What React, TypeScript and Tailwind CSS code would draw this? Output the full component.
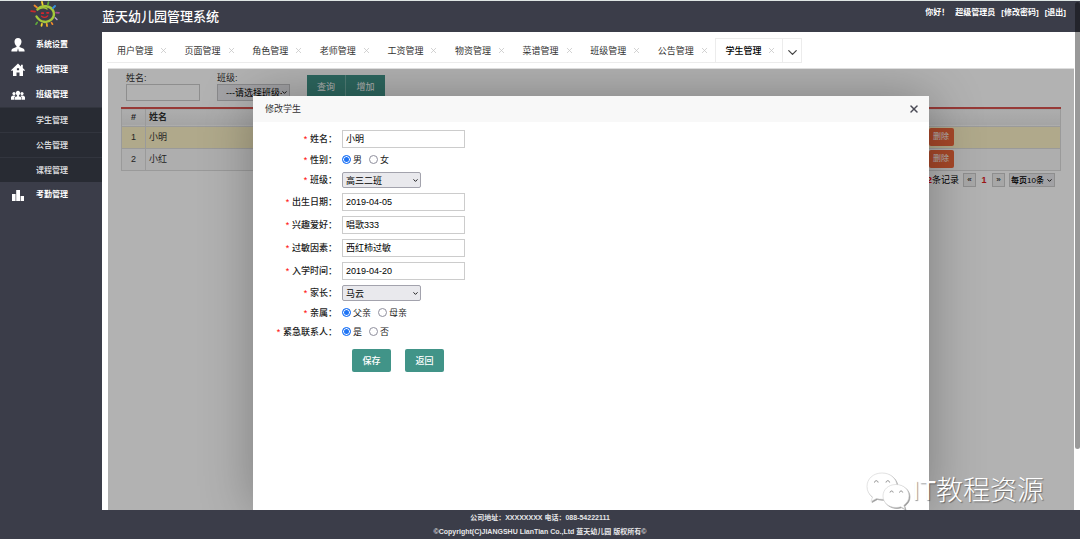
import React from 'react';
import { ChevronDown, X } from 'lucide-react';

const tabs = [
  '用户管理',
  '页面管理',
  '角色管理',
  '老师管理',
  '工资管理',
  '物资管理',
  '菜谱管理',
  '班级管理',
  '公告管理',
  '学生管理'
];

const students = ['小明', '小红'];

type Field = {
  id: string;
  label: string;
  type: 'text' | 'select' | 'radio';
  value: string;
  options?: string[];
};

const fields: Field[] = [
  { id: 'name', label: '姓名', type: 'text', value: '小明' },
  { id: 'sex', label: '性别', type: 'radio', value: '男', options: ['男', '女'] },
  { id: 'clazz', label: '班级', type: 'select', value: '高三二班' },
  { id: 'birthday', label: '出生日期', type: 'text', value: '2019-04-05' },
  { id: 'hobby', label: '兴趣爱好', type: 'text', value: '唱歌333' },
  { id: 'allergy', label: '过敏因素', type: 'text', value: '西红柿过敏' },
  { id: 'entrance', label: '入学时间', type: 'text', value: '2019-04-20' },
  { id: 'parent', label: '家长', type: 'select', value: '马云' },
  { id: 'relation', label: '亲属', type: 'radio', value: '父亲', options: ['父亲', '母亲'] },
  { id: 'urgent', label: '紧急联系人', type: 'radio', value: '是', options: ['是', '否'] }
];

const SunLogo: React.FC = () => (
  <svg viewBox="0 0 30 26" className="w-[30px] h-[26px]" fill="none" strokeLinecap="round">
    <path d="M7.500 8.500C11 3.500 21 4 23.500 10.500C25.500 17 19.500 21.800 14 20.800C10.500 20.300 8 18 6.500 15.500" stroke="#a5c83a" strokeWidth="2.400" />
    <path d="M7.500 8.500C11 6.500 15 6.500 17 8" stroke="#a5c83a" strokeWidth="1.500" />
    <path d="M11.800 12.200h1.400M17 11.800h1.400" stroke="#d9252b" strokeWidth="1.800" />
    <path d="M11.500 15.200c2 1.600 4.600 1.400 6.200-.4" stroke="#d9252b" strokeWidth="1.200" />
    <path d="M12 1l.6 2.600" stroke="#f3d22f" strokeWidth="1.800" />
    <path d="M18.500 1.200l-.6 2.200" stroke="#5fa83a" strokeWidth="1.800" />
    <path d="M4.500 4.500l2.500 2" stroke="#ee8a2c" strokeWidth="1.800" />
    <path d="M1.200 10.200l3.800.5" stroke="#c62a2d" strokeWidth="1.800" />
    <path d="M25 5l-2 2" stroke="#3b8fd6" strokeWidth="2" />
    <path d="M29 11.800l-3-.2" stroke="#a04b8f" strokeWidth="1.700" />
    <path d="M27 18.500l-1.800-1.800" stroke="#b8a3cf" strokeWidth="1.400" />
    <path d="M22.500 23.200l-1-1.600" stroke="#ee8a2c" strokeWidth="1.700" />
    <path d="M17 25l-.2-2" stroke="#f0a52c" strokeWidth="1.800" />
    <path d="M11.500 24.800l.4-1.800" stroke="#f3d22f" strokeWidth="1.800" />
    <path d="M6 23.200l1.200-1.700" stroke="#5fa83a" strokeWidth="1.700" />
  </svg>
);

const UserIcon = () => (
  <svg viewBox="0 0 14 14" className="w-[14px] h-[14px]" fill="currentColor">
    <path d="M7 0C4.800 0 3.500 1.500 3.500 3.600c0 2 .9 3.600 2 4.400v1L1.800 10.400C.6 10.900.4 12 .4 13.400h5.800L7 10.200l.8 3.200h5.800c0-1.400-.2-2.500-1.400-3L8.500 9V8c1.100-.8 2-2.400 2-4.400C10.500 1.500 9.200 0 7 0z" />
  </svg>
);

const HomeIcon = () => (
  <svg viewBox="0 0 14 14" className="w-[14px] h-[14px]" fill="currentColor">
    <path fillRule="evenodd" d="M7 .6L10 3.400V1.800h1.800V5L14 7.200l-.9.900L12 7.200V13H8.500V9.500h-3V13H2V7.200l-1.100.9L0 7.200zM5.900 5.300v2h2.200v-2z" />
  </svg>
);

const GroupIcon = () => (
  <svg viewBox="0 0 14 14" className="w-[14px] h-[14px]" fill="currentColor">
    <circle cx="3" cy="5.600" r="1.600" />
    <circle cx="11" cy="5.600" r="1.600" />
    <path d="M0 11.800V9.200c0-.7 1-1.300 2.300-1.700h1.400L4.600 8 3.300 9.200v2.600zM14 11.800V9.200c0-.7-1-1.300-2.300-1.700h-1.400L9.400 8l1.300 1.200v2.600z" />
    <path d="M7 2.800c-1.400 0-2.100 1-2.100 2.300 0 1.100.5 2 1.200 2.500v.6L4.300 9c-.5.300-.6.700-.6 1.300v1.500h6.600v-1.500c0-.6-.1-1-.6-1.300l-1.800-.8v-.6c.7-.5 1.200-1.400 1.200-2.500C9.100 3.800 8.400 2.800 7 2.800z" />
  </svg>
);

const ChartIcon = () => (
  <svg viewBox="0 0 14 14" className="w-[14px] h-[14px]" fill="currentColor">
    <path d="M1 6h3.600v7H1zM5.200 2h3.800v11H5.200zM9.600 8H13v5H9.600z" />
  </svg>
);

const menu = [
  { name: '系统设置', icon: UserIcon, children: [] },
  { name: '校园管理', icon: HomeIcon, children: [] },
  { name: '班级管理', icon: GroupIcon, children: ['学生管理', '公告管理', '课程管理'] },
  { name: '考勤管理', icon: ChartIcon, children: [] }
];

const Sidebar: React.FC = () => (
  <nav className="w-[102px] shrink-0 text-[8px] font-bold">
    {menu.map((item) => (
      <div key={item.name}>
        <a href="#" className="flex items-center h-[25px] pl-[11px] gap-[11px] text-white">
          <item.icon />
          {item.name}
        </a>
        {item.children.map((child) => (
          <a key={child} href="#" className="flex items-center h-[25px] pt-px pl-9 bg-[#282b33] border-t border-[#32353e] text-[#d4d5d8]">
            {child}
          </a>
        ))}
      </div>
    ))}
  </nav>
);

const TabBar: React.FC = () => (
  <div className="flex pt-[6px] pl-[5px] h-[36px] shrink-0">
    <div className="grid grid-cols-10 w-[676px] h-[25px]">
      {tabs.map((tab, index) => (
        <div
          key={tab}
          className={
            index === tabs.length - 1
              ? 'flex items-center pl-[9px] gap-[6px] border border-[#ececec] font-medium text-black'
              : 'flex items-center pt-px pl-[10px] gap-[6px] border-b border-[#ececec] text-[#333]'
          }
        >
          <button type="button" className="whitespace-nowrap">{tab}</button>
          <button type="button" aria-label="关闭" className="text-[#c4c4c4]">
            <X className="w-[9px] h-[9px]" strokeWidth={2} />
          </button>
        </div>
      ))}
    </div>
    <button type="button" aria-label="更多" className="flex items-center justify-center w-[19px] h-[25px] pt-[3px] border border-l-0 border-[#ececec] text-[#444]">
      <ChevronDown className="w-[15px] h-[15px]" strokeWidth={2} />
    </button>
  </div>
);

const StudentList: React.FC = () => (
  <div className="px-[13px] pt-[3px]">
    <form className="flex items-start pl-[5px] h-[35px]">
      <div className="w-[91px]">
        <label htmlFor="q-name" className="block h-[12px] leading-[12px]">姓名:</label>
        <input id="q-name" className="block w-[74px] h-[17px] px-1 border border-[#ccc] bg-white" />
      </div>
      <div className="w-[90px]">
        <label htmlFor="q-class" className="block h-[12px] leading-[12px]">班级:</label>
        <div className="relative w-[73px]">
          <select id="q-class" className="block appearance-none w-full h-[17px] pl-[8px] pr-[7px] border border-[#c4c4c8] bg-[#e9e9ed] text-black">
            <option>---请选择班级---</option>
          </select>
          <ChevronDown className="absolute right-[2px] top-[5px] w-[7px] h-[7px] text-black" strokeWidth={3} />
        </div>
      </div>
      <div className="flex mt-[3px] text-white">
        <button type="button" className="w-[39px] h-[23px] bg-[#419488] border-r border-[#75b3aa]">查询</button>
        <button type="button" className="w-[39px] h-[23px] bg-[#419488]">增加</button>
      </div>
    </form>
    <table className="w-full table-fixed border-collapse border border-[#ddd]">
      <thead>
        <tr className="h-[18px] border-t-2 border-t-[#d9534f] border-b border-b-[#ddd] bg-linear-to-b from-[#f8f8f8] to-[#ececec] text-[#333]">
          <th className="w-[24px] border-r border-[#ddd]">#</th>
          <th className="text-left pl-[3px]">姓名</th>
          <th className="w-[132px]"></th>
        </tr>
      </thead>
      <tbody>
        {students.map((name, index) => (
          <tr key={name} className="h-[22px] border-b border-[#ddd] odd:bg-[#fcf3c7] even:bg-[#f9f9f9]">
            <td className="text-center border-r border-[#ddd]">{index + 1}</td>
            <td className="pl-[3px]">{name}</td>
            <td>
              <button type="button" className="block w-[25px] h-[18px] rounded-xs bg-[#f0673b] text-[8px] text-white">删除</button>
            </td>
          </tr>
        ))}
      </tbody>
    </table>
    <div className="flex items-center justify-end pr-[6px] mt-[2px] h-[15px] text-black">
      <span>共<b className="text-[#e00]">2</b>条记录</span>
      <button type="button" className="w-[13px] h-[14px] ml-[4px] border border-[#ccc] bg-[#f0f0f0] text-[8px] leading-none">«</button>
      <span className="w-[16px] text-center font-bold text-[#e02020]">1</span>
      <button type="button" className="w-[13px] h-[14px] mr-[4px] border border-[#ccc] bg-[#f0f0f0] text-[8px] leading-none">»</button>
      <div className="relative">
        <select aria-label="每页" className="block appearance-none w-[46px] h-[14px] pl-px border border-[#ccc] bg-[#e9e9ed] text-[8px] font-medium">
          <option>每页10条</option>
        </select>
        <ChevronDown className="absolute right-[2px] top-[4px] w-[7px] h-[7px]" strokeWidth={3} />
      </div>
    </div>
  </div>
);

const FormField: React.FC<{ field: Field }> = ({ field }) => {
  if (field.type === 'radio') {
    return (
      <div role="radiogroup" aria-labelledby={field.id} className="flex items-center h-[19px]">
        <span id={field.id} className="w-[84px] mr-[5px] pt-px text-right font-medium">
          <span className="text-[#f00]">*</span> {field.label}：
        </span>
        {field.options?.map((option) => (
          <label key={option} className="flex items-center gap-[2px] mr-[7px]">
            <input
              type="radio"
              name={field.id}
              defaultChecked={option === field.value}
              className="appearance-none w-[9px] h-[9px] rounded-full border border-[#8f8f9d] checked:border-[#1f74f5] checked:bg-[#1f74f5] checked:shadow-[inset_0_0_0_1px_white]"
            />
            <span className="pt-px">{option}</span>
          </label>
        ))}
      </div>
    );
  }

  return (
    <div className={field.type === 'text' ? 'flex items-center h-[23px]' : 'flex items-center h-[21px]'}>
      <label htmlFor={field.id} className="w-[84px] mr-[5px] pt-px text-right font-medium">
        <span className="text-[#f00]">*</span> {field.label}：
      </label>
      {field.type === 'text' ? (
        <input id={field.id} defaultValue={field.value} className="w-[123px] h-[18px] px-[3px] border border-[#ccc] bg-white text-black" />
      ) : (
        <div className="relative">
          <select id={field.id} className="block appearance-none w-[79px] h-[16px] pt-px pl-[3px] rounded-xs border border-[#a3a3ad] bg-[#e9e9ed] text-black">
            <option>{field.value}</option>
          </select>
          <ChevronDown className="absolute right-[2px] top-[5px] w-[7px] h-[7px] text-black" strokeWidth={3} />
        </div>
      )}
    </div>
  );
};

const EditDialog: React.FC = () => (
  <div role="dialog" aria-label="修改学生" className="w-[70%] h-full bg-white shadow-[1px_1px_50px_rgba(0,0,0,0.3)]">
    <div className="flex items-center justify-between h-[26px] pl-[12px] pr-[9px] bg-[#f8f8f8] text-[#333]">
      <h2>修改学生</h2>
      <button type="button" aria-label="关闭">
        <X className="w-[12px] h-[12px] text-[#4a4a55]" strokeWidth={3} />
      </button>
    </div>
    <form className="pt-[5px] text-[#222]">
      {fields.map((field) => (
        <FormField key={field.id} field={field} />
      ))}
      <div className="flex gap-[14px] mt-[8px] pl-[99px] text-white font-medium">
        <button type="button" className="w-[39px] h-[23px] pt-px rounded-xs bg-[#419488]">保存</button>
        <button type="button" className="w-[39px] h-[23px] pt-px rounded-xs bg-[#419488]">返回</button>
      </div>
    </form>
  </div>
);

const Watermark: React.FC = () => (
  <div className="absolute right-[36px] bottom-[28px] flex items-center gap-[2px] h-[40px] pointer-events-none text-white">
    <svg viewBox="0 0 44 38" className="w-[44px] h-[38px] drop-shadow-[1px_1px_0px_rgba(0,0,0,0.4)]" fill="white" stroke="#d0d0d0" strokeWidth="0.600">
      <path d="M16 1C7 1 1 7 1 14.500c0 4.500 2 8 5.500 10.500L5 29.500l5.500-3c2 .6 4 .9 6.500.8C25 27 31 21.500 31 14.500 31 7 25 1 16 1z" />
      <path d="M30 12.500c-7.500 0-13 5-13 11.500s5.500 11.500 13 11.500c1.600 0 3.200-.2 4.700-.7l4.300 2.200-1.200-3.800c3.200-2.200 5.200-5.400 5.200-9.200 0-6.500-5.500-11.500-13-11.500z" />
      <g fill="none" stroke="#888" strokeWidth="1">
        <path d="M8.500 10.500c.4-2.400 3.200-2.400 3.600 0M20 10.500c.4-2.400 3.200-2.400 3.600 0M24 20.500c.3-2 2.900-2 3.200 0M33.500 20.500c.3-2 2.900-2 3.200 0" />
      </g>
    </svg>
    <span className="text-[27px] leading-none font-light whitespace-nowrap [text-shadow:1px_1px_1px_rgba(0,0,0,0.4)]">IT教程资源</span>
  </div>
);

const App: React.FC = () => {
  return (
    <div className="relative flex flex-col h-screen overflow-hidden border-t border-[#dfe6e4] bg-[#3b3d49] text-[9px] leading-[14px] text-[#333] [font-family:'Liberation_Sans','Noto_Sans_CJK_SC',sans-serif]">
      <header className="flex h-[31px] shrink-0 text-white">
        <div className="w-[102px] pl-[30px]">
          <SunLogo />
        </div>
        <h1 className="flex-1 flex items-center text-[13px] font-medium">蓝天幼儿园管理系统</h1>
        <div className="flex gap-[6px] h-[24px] items-center pr-[14px] text-[8px] font-bold">
          <span>你好！</span>
          <span>超级管理员</span>
          <a href="#">[修改密码]</a>
          <a href="#">[退出]</a>
        </div>
      </header>

      <div className="flex flex-1 min-h-0">
        <Sidebar />
        <main className="flex flex-col flex-1 min-w-0 pr-[6px] bg-white">
          <TabBar />
          <div className="relative flex-1 min-h-0 ml-[6px] border-t border-[#ddd] bg-white">
            <StudentList />
            {/* Modal layer */}
            <div className="absolute inset-0 flex justify-center pt-[27px] overflow-hidden bg-black/30">
              <EditDialog />
            </div>
          </div>
        </main>
      </div>

      <footer className="h-[29px] shrink-0 pt-px text-center text-[7px] leading-[14px] font-bold text-[#e6e6e8]">
        <p>公司地址：XXXXXXXX 电话：088-54222111</p>
        <p>©Copyright(C)JIANGSHU LianTian Co.,Ltd 蓝天幼儿园 版权所有©</p>
      </footer>

      {/* Scrollbar thumb */}
      <div className="absolute right-0 top-px w-[5px] h-[83%] rounded-full bg-black/40"></div>
      <Watermark />
    </div>
  );
};

export default App;
